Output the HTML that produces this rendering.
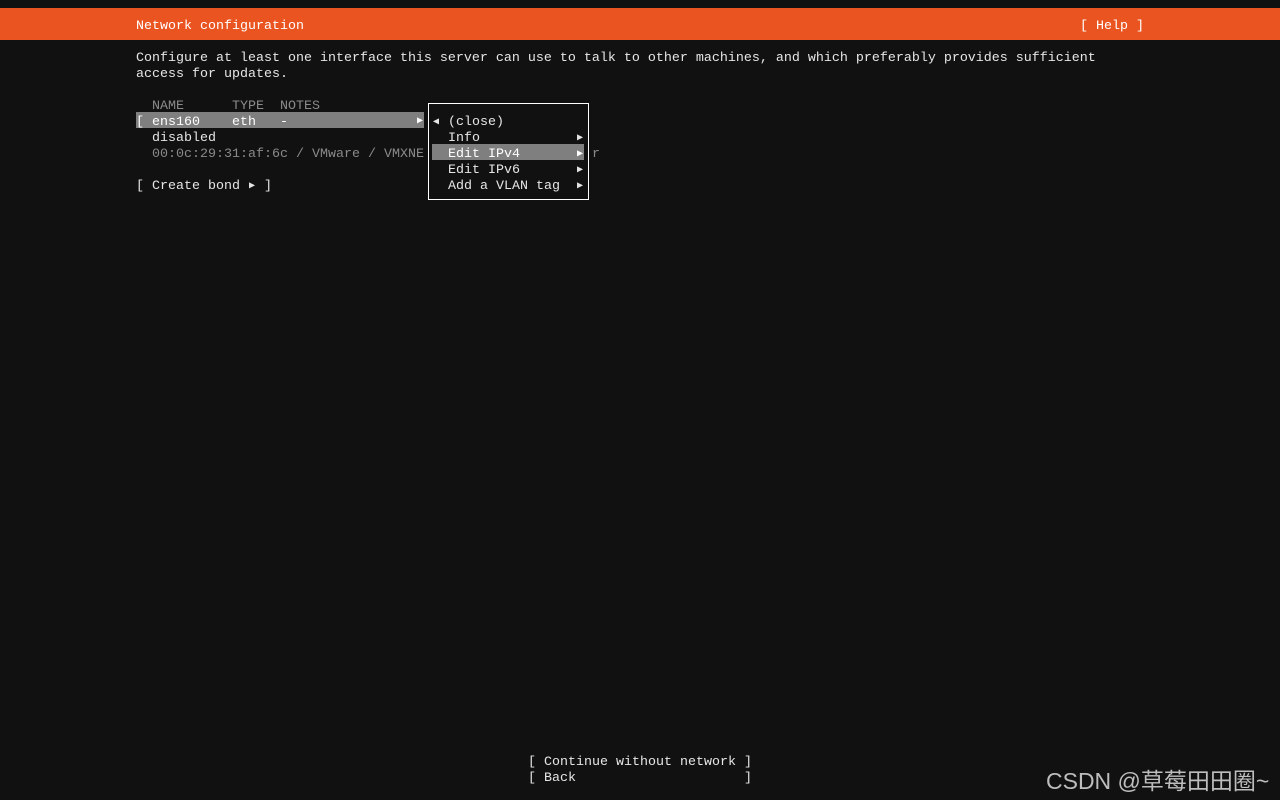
<!DOCTYPE html>
<html><head><meta charset="utf-8"><style>
body{margin:0;width:1280px;height:800px;background:#111;overflow:hidden;position:relative;font-family:"Liberation Mono",monospace;font-size:13.33px;color:#e6e6e6}
.l{position:absolute;height:16px;line-height:22px;white-space:pre}
.g{color:#8a8a8a}
.hl{background:#7f7f7f;color:#fff}
.a{position:absolute;font-size:10px;line-height:16px;height:16px}
</style></head><body>
<div style="position:absolute;left:0;top:8px;width:1280px;height:32px;background:#e95420"></div>
<div class="l" style="left:136px;top:16px;color:#fff">Network configuration</div>
<div class="l" style="left:1080px;top:16px;color:#fff">[ Help ]</div>
<div class="l" style="left:136px;top:48px">Configure at least one interface this server can use to talk to other machines, and which preferably provides sufficient</div>
<div class="l" style="left:136px;top:64px">access for updates.</div>
<div class="l g" style="left:152px;top:96px">NAME      TYPE  NOTES</div>
<div class="hl" style="position:absolute;left:136px;top:112px;width:288px;height:16px"></div>
<div class="l" style="left:136px;top:112px;color:#fff">[ ens160    eth   -</div>
<div class="a" style="left:417px;top:114px;color:#fff">▶</div>
<div class="l" style="left:152px;top:128px">disabled</div>
<div class="l g" style="left:152px;top:144px">00:0c:29:31:af:6c / VMware / VMXNE</div>
<div class="l g" style="left:592px;top:144px">r</div>
<div class="l" style="left:136px;top:176px">[ Create bond   ]</div>
<div class="a" style="left:249px;top:179px">▶</div>
<div style="position:absolute;left:428px;top:103px;width:159px;height:95px;border:1px solid #fff;background:#111"></div>
<div class="hl" style="position:absolute;left:432px;top:144px;width:152px;height:16px"></div>
<div class="a" style="left:433px;top:115px">◀</div>
<div class="l" style="left:448px;top:112px">(close)</div>
<div class="l" style="left:448px;top:128px">Info</div>
<div class="l" style="left:448px;top:144px;color:#fff">Edit IPv4</div>
<div class="l" style="left:448px;top:160px">Edit IPv6</div>
<div class="l" style="left:448px;top:176px">Add a VLAN tag</div>
<div class="a" style="left:577px;top:131px">▶</div>
<div class="a" style="left:577px;top:147px;color:#fff">▶</div>
<div class="a" style="left:577px;top:163px">▶</div>
<div class="a" style="left:577px;top:179px">▶</div>
<div class="l" style="left:528px;top:752px">[ Continue without network ]</div>
<div class="l" style="left:528px;top:768px">[ Back                     ]</div>
<div style="position:absolute;left:1046px;top:762px;font-family:'Liberation Sans','Noto Sans CJK SC',sans-serif;font-size:23px;color:#bdbdbd;white-space:nowrap">CSDN @草莓田田圈~</div>
</body></html>
